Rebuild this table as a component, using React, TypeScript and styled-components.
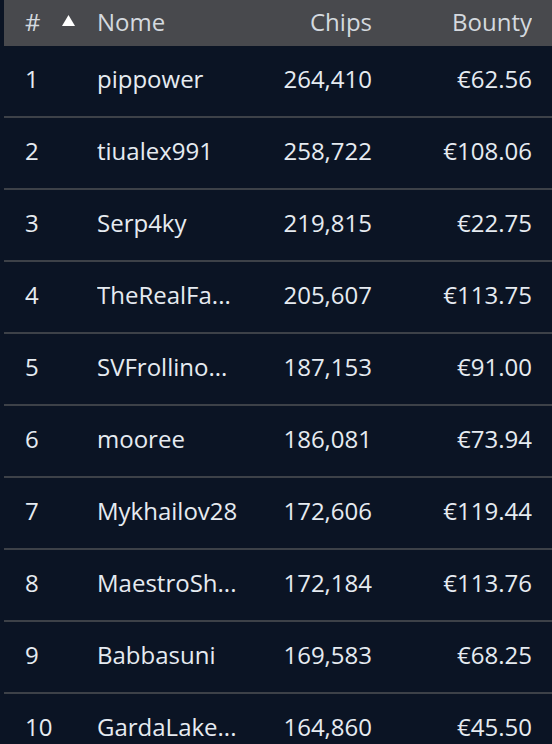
import React from "react";
import styled, { createGlobalStyle } from "styled-components";

const GlobalStyle = createGlobalStyle`
  html, body {
    margin: 0;
    padding: 0;
    background: #0b1424;
  }
  body {
    font-family: "Open Sans", "Noto Sans", sans-serif;
    -webkit-font-smoothing: antialiased;
  }
`;

const COLUMNS = "72px 160px 115px 160px";

const Table = styled.div`
  margin-left: 4px;
  width: 548px;
  height: 744px;
  overflow: hidden;
  background: #0b1424;
  color: #e6ebf1;
  font-size: 24px;
  font-weight: 500;
`;

const HeaderRow = styled.div`
  display: grid;
  grid-template-columns: ${COLUMNS};
  align-items: center;
  box-sizing: border-box;
  height: 46px;
  padding: 0 20px 3px 21px;
  background: #48494d;
  color: #d4d9df;
`;

// text sits a little above the middle of each row
const Row = styled.div`
  display: grid;
  grid-template-columns: ${COLUMNS};
  align-items: center;
  height: 64px;
  padding: 0 20px 6px 21px;
  border-bottom: 2px solid #3d4148;
`;

const Cell = styled.div<{ $align?: "left" | "right" }>`
  text-align: ${(p) => p.$align ?? "left"};
  white-space: nowrap;
  overflow: hidden;
  text-overflow: ellipsis;
`;

const SortCell = styled.div`
  display: flex;
  align-items: center;
  gap: 21px;
`;

const SortArrow = styled.svg`
  width: 13px;
  height: 11px;
  margin-top: -2px;
`;

type Player = { rank: number; name: string; chips: string; bounty: string };

const players: Player[] = [
  { rank: 1, name: "pippower", chips: "264,410", bounty: "€62.56" },
  { rank: 2, name: "tiualex991", chips: "258,722", bounty: "€108.06" },
  { rank: 3, name: "Serp4ky", chips: "219,815", bounty: "€22.75" },
  { rank: 4, name: "TheRealFa...", chips: "205,607", bounty: "€113.75" },
  { rank: 5, name: "SVFrollino...", chips: "187,153", bounty: "€91.00" },
  { rank: 6, name: "mooree", chips: "186,081", bounty: "€73.94" },
  { rank: 7, name: "Mykhailov28", chips: "172,606", bounty: "€119.44" },
  { rank: 8, name: "MaestroSh...", chips: "172,184", bounty: "€113.76" },
  { rank: 9, name: "Babbasuni", chips: "169,583", bounty: "€68.25" },
  { rank: 10, name: "GardaLake...", chips: "164,860", bounty: "€45.50" },
];

export default function App() {
  return (
    <>
      <GlobalStyle />
      <Table>
        <HeaderRow>
          <SortCell>
            <span>#</span>
            <SortArrow viewBox="0 0 13 11">
              <polygon points="6.5,0 13,11 0,11" fill="#ffffff" />
            </SortArrow>
          </SortCell>
          <Cell>Nome</Cell>
          <Cell $align="right">Chips</Cell>
          <Cell $align="right">Bounty</Cell>
        </HeaderRow>
        {players.map((p) => (
          <Row key={p.rank}>
            <Cell>{p.rank}</Cell>
            <Cell>{p.name}</Cell>
            <Cell $align="right">{p.chips}</Cell>
            <Cell $align="right">{p.bounty}</Cell>
          </Row>
        ))}
      </Table>
    </>
  );
}
